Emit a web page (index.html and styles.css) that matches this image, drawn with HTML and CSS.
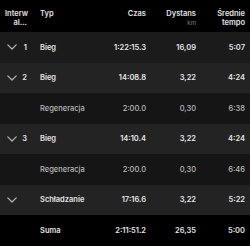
FILE: index.html
```html
<!DOCTYPE html>
<html lang="pl">
<head>
<meta charset="utf-8">
<link rel="stylesheet" href="styles.css">
</head>
<body>
<div class="table">
  <div class="row head">
    <div class="c int">Interw<br>al...</div>
    <div class="c typ">Typ</div>
    <div class="c num">Czas</div>
    <div class="c num">Dystans<br><span class="unit">km</span></div>
    <div class="c num">Średnie<br>tempo</div>
  </div>
  <div class="row r1">
    <div class="c int"><svg class="chev" viewBox="0 0 10 6"><path d="M0.8 0.8 L5 5 L9.2 0.8"/></svg><span>1</span></div>
    <div class="c typ">Bieg</div>
    <div class="c num">1:22:15.3</div>
    <div class="c num">16,09</div>
    <div class="c num">5:07</div>
  </div>
  <div class="row r2">
    <div class="c int"><svg class="chev" viewBox="0 0 10 6"><path d="M0.8 0.8 L5 5 L9.2 0.8"/></svg><span>2</span></div>
    <div class="c typ">Bieg</div>
    <div class="c num">14:08.8</div>
    <div class="c num">3,22</div>
    <div class="c num">4:24</div>
  </div>
  <div class="row rg">
    <div class="c int"></div>
    <div class="c typ">Regeneracja</div>
    <div class="c num">2:00.0</div>
    <div class="c num">0,30</div>
    <div class="c num">6:38</div>
  </div>
  <div class="row r2">
    <div class="c int"><svg class="chev" viewBox="0 0 10 6"><path d="M0.8 0.8 L5 5 L9.2 0.8"/></svg><span>3</span></div>
    <div class="c typ">Bieg</div>
    <div class="c num">14:10.4</div>
    <div class="c num">3,22</div>
    <div class="c num">4:24</div>
  </div>
  <div class="row rg">
    <div class="c int"></div>
    <div class="c typ">Regeneracja</div>
    <div class="c num">2:00.0</div>
    <div class="c num">0,30</div>
    <div class="c num">6:46</div>
  </div>
  <div class="row r2">
    <div class="c int"><svg class="chev" viewBox="0 0 10 6"><path d="M0.8 0.8 L5 5 L9.2 0.8"/></svg><span></span></div>
    <div class="c typ">Schładzanie</div>
    <div class="c num">17:16.6</div>
    <div class="c num">3,22</div>
    <div class="c num">5:22</div>
  </div>
  <div class="row sum">
    <div class="c int"></div>
    <div class="c typ">Suma</div>
    <div class="c num">2:11:51.2</div>
    <div class="c num">26,35</div>
    <div class="c num">5:00</div>
  </div>
</div>
</body>
</html>
```
FILE: styles.css
```css
html, body {
  margin: 0;
  padding: 0;
  background: #000;
}
body {
  width: 250px;
  height: 246px;
  overflow: hidden;
  font-family: Inter, "Noto Sans", sans-serif;
  font-size: 7.5px;
  color: #e4e4e4;
  font-weight: 600;
}
.table {
  display: flex;
  flex-direction: column;
}
.row {
  display: grid;
  grid-template-columns: 22px 69px 50px 50px 49px;
  padding: 0 5px;
  height: 30.5px;
  align-items: center;
}
.row.head {
  height: 32px;
  align-items: start;
  padding-top: 9px;
  box-sizing: border-box;
  line-height: 9px;
  background: #000;
}
.c.typ {
  padding-left: 13px;
}
.c.num {
  text-align: right;
}
.c.int {
  text-align: right;
  display: flex;
  align-items: center;
  justify-content: space-between;
}
.head .c.int {
  display: block;
}
.chev {
  width: 10px;
  height: 6px;
  margin-left: 2px;
  fill: none;
  stroke: #b5b5b5;
  stroke-width: 1.2;
  stroke-linecap: round;
  stroke-linejoin: round;
}
.unit {
  color: #6f6f6f;
  font-size: 6px;
  font-weight: 500;
}
.r1 { background: #1b1b1b; }
.r2 { background: #232323; }
.rg {
  background: #151515;
  color: #b9b9b9;
  font-weight: 500;
}
.sum { background: #000; }
```
